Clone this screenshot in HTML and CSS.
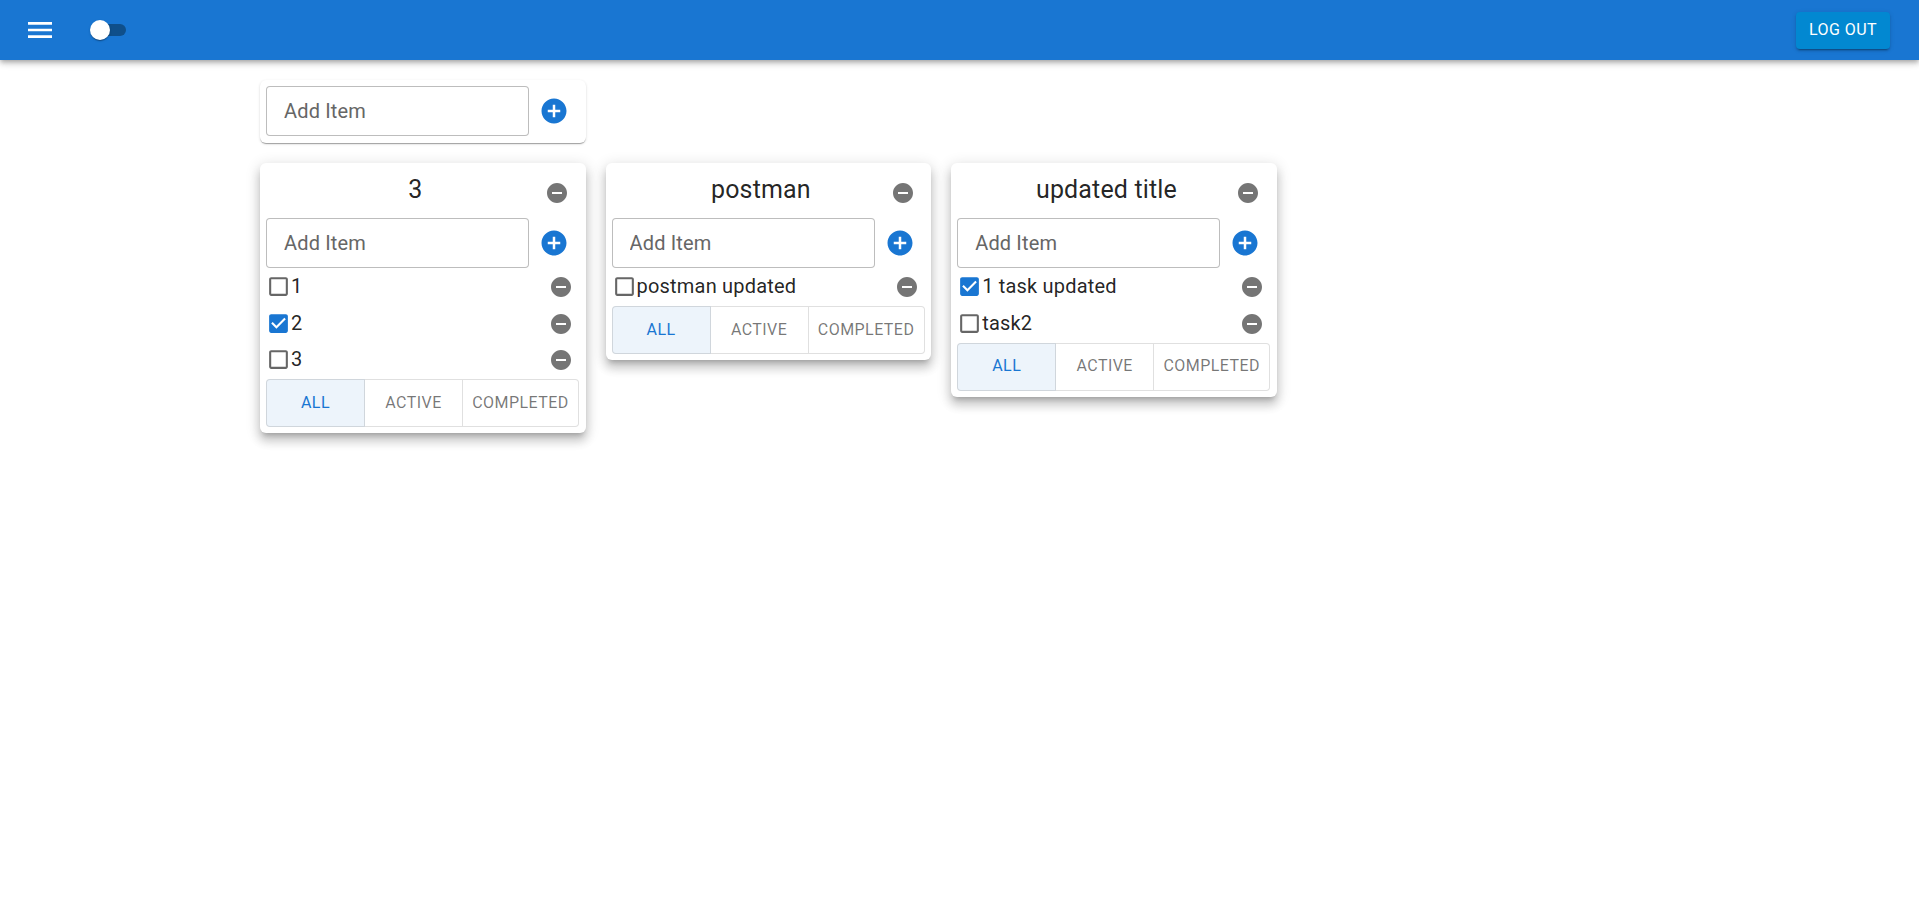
FILE: index.html
```html
<!DOCTYPE html>
<html lang="en">
<head>
    <meta charset="UTF-8">
    <meta name="viewport" content="width=device-width, initial-scale=1.0">
    <title>Todo Lists</title>
    <link rel="stylesheet" href="styles.css">
</head>
<body>
    <svg class="icon-defs" aria-hidden="true">
        <symbol id="i-add" viewBox="0 0 24 24"><path d="M12 2C6.48 2 2 6.48 2 12s4.48 10 10 10 10-4.48 10-10S17.52 2 12 2zm5 11h-4v4h-2v-4H7v-2h4V7h2v4h4v2z"/></symbol>
        <symbol id="i-remove" viewBox="0 0 24 24"><path d="M12 2C6.48 2 2 6.48 2 12s4.48 10 10 10 10-4.48 10-10S17.52 2 12 2zm5 11H7v-2h10v2z"/></symbol>
        <symbol id="i-blank" viewBox="0 0 24 24"><path d="M19 5v14H5V5h14m0-2H5c-1.1 0-2 .9-2 2v14c0 1.1.9 2 2 2h14c1.1 0 2-.9 2-2V5c0-1.1-.9-2-2-2z"/></symbol>
        <symbol id="i-checked" viewBox="0 0 24 24"><path d="M19 3H5c-1.11 0-2 .9-2 2v14c0 1.1.89 2 2 2h14c1.11 0 2-.9 2-2V5c0-1.1-.89-2-2-2zm-9 14l-5-5 1.41-1.41L10 14.17l7.59-7.59L19 8l-9 9z"/></symbol>
    </svg>

    <header class="appbar">
        <svg class="menu-icon" viewBox="0 0 24 24"><path d="M3 18h18v-2H3v2zm0-5h18v-2H3v2zm0-7v2h18V6H3z"/></svg>
        <div class="switch"><span class="switch-track"></span><span class="switch-thumb"></span></div>
        <button class="logout">Log out</button>
    </header>

    <main class="page">
        <div class="card add-card">
            <div class="add-row">
                <input type="text" class="add-input" placeholder="Add Item">
                <svg class="add-btn"><use href="#i-add"/></svg>
            </div>
        </div>

        <div class="board">
            <section class="card">
                <div class="title-row">
                    <h3 class="title">3</h3>
                    <svg class="del-btn title-del"><use href="#i-remove"/></svg>
                </div>
                <div class="add-row">
                    <input type="text" class="add-input" placeholder="Add Item">
                    <svg class="add-btn"><use href="#i-add"/></svg>
                </div>
                <ul class="tasks">
                    <li class="task"><svg class="box"><use href="#i-blank"/></svg><span class="task-text">1</span><svg class="del-btn"><use href="#i-remove"/></svg></li>
                    <li class="task"><svg class="box checked"><use href="#i-checked"/></svg><span class="task-text">2</span><svg class="del-btn"><use href="#i-remove"/></svg></li>
                    <li class="task"><svg class="box"><use href="#i-blank"/></svg><span class="task-text">3</span><svg class="del-btn"><use href="#i-remove"/></svg></li>
                </ul>
                <div class="filters">
                    <button class="filter selected">All</button>
                    <button class="filter">Active</button>
                    <button class="filter wide">Completed</button>
                </div>
            </section>

            <section class="card">
                <div class="title-row">
                    <h3 class="title">postman</h3>
                    <svg class="del-btn title-del"><use href="#i-remove"/></svg>
                </div>
                <div class="add-row">
                    <input type="text" class="add-input" placeholder="Add Item">
                    <svg class="add-btn"><use href="#i-add"/></svg>
                </div>
                <ul class="tasks">
                    <li class="task"><svg class="box"><use href="#i-blank"/></svg><span class="task-text">postman updated</span><svg class="del-btn"><use href="#i-remove"/></svg></li>
                </ul>
                <div class="filters">
                    <button class="filter selected">All</button>
                    <button class="filter">Active</button>
                    <button class="filter wide">Completed</button>
                </div>
            </section>

            <section class="card">
                <div class="title-row">
                    <h3 class="title">updated title</h3>
                    <svg class="del-btn title-del"><use href="#i-remove"/></svg>
                </div>
                <div class="add-row">
                    <input type="text" class="add-input" placeholder="Add Item">
                    <svg class="add-btn"><use href="#i-add"/></svg>
                </div>
                <ul class="tasks">
                    <li class="task"><svg class="box checked"><use href="#i-checked"/></svg><span class="task-text">1 task updated</span><svg class="del-btn"><use href="#i-remove"/></svg></li>
                    <li class="task"><svg class="box"><use href="#i-blank"/></svg><span class="task-text">task2</span><svg class="del-btn"><use href="#i-remove"/></svg></li>
                </ul>
                <div class="filters">
                    <button class="filter selected">All</button>
                    <button class="filter">Active</button>
                    <button class="filter wide">Completed</button>
                </div>
            </section>
        </div>
    </main>
</body>
</html>
```

FILE: styles.css
```css
* {
    box-sizing: border-box;
}
body {
    margin: 0;
    background: #fff;
    color: rgba(0, 0, 0, 0.87);
    font-family: Roboto, "Liberation Sans", sans-serif;
}
.icon-defs {
    display: none;
}
.appbar {
    display: flex;
    align-items: center;
    height: 60px;
    padding: 0 29px 0 24px;
    background: #1976d2;
    box-shadow: 0 2px 4px -1px rgba(0, 0, 0, 0.2), 0 4px 5px 0 rgba(0, 0, 0, 0.14), 0 1px 10px 0 rgba(0, 0, 0, 0.12);
}
.menu-icon {
    width: 32px;
    height: 32px;
    fill: #fff;
}
.switch {
    position: relative;
    width: 36px;
    height: 20px;
    margin-left: 34px;
}
.switch-track {
    position: absolute;
    top: 4px;
    left: 2px;
    width: 34px;
    height: 12px;
    border-radius: 6px;
    background: #0f4f8a;
}
.switch-thumb {
    position: absolute;
    top: 0;
    left: 0;
    width: 20px;
    height: 20px;
    border-radius: 50%;
    background: #fff;
    box-shadow: 0 2px 1px -1px rgba(0, 0, 0, 0.2), 0 1px 1px 0 rgba(0, 0, 0, 0.14), 0 1px 3px 0 rgba(0, 0, 0, 0.12);
}
.logout {
    width: 94px;
    height: 37px;
    margin-left: auto;
    padding: 0 0 2px;
    border: none;
    border-radius: 4px;
    background: #0288d1;
    color: #fff;
    font: 400 16px Roboto, sans-serif;
    letter-spacing: 0.45px;
    text-transform: uppercase;
    box-shadow: 0 3px 1px -2px rgba(0, 0, 0, 0.2), 0 2px 2px 0 rgba(0, 0, 0, 0.14), 0 1px 5px 0 rgba(0, 0, 0, 0.12);
}
.page {
    min-height: calc(100vh - 60px);
    padding: 20px 0 0 260px;
}
.card {
    width: 325.6px;
    padding: 6px;
    border-radius: 6px;
    background: #fff;
    box-shadow: 0 5px 5px -3px rgba(0, 0, 0, 0.2), 0 8px 10px 1px rgba(0, 0, 0, 0.14), 0 3px 14px 2px rgba(0, 0, 0, 0.12);
}
.add-card {
    height: 63px;
    box-shadow: 0 2px 1px -1px rgba(0, 0, 0, 0.2), 0 1px 1px 0 rgba(0, 0, 0, 0.14), 0 1px 3px 0 rgba(0, 0, 0, 0.12);
}
.board {
    display: flex;
    align-items: flex-start;
    gap: 20px;
    margin-top: 20px;
}
.title-row {
    display: flex;
    height: 49px;
}
.title {
    flex: 1;
    margin: 0;
    padding-top: 3px;
    font-size: 25px;
    font-weight: 400;
    letter-spacing: 0.15px;
    line-height: 36px;
    text-align: center;
}
.del-btn {
    flex: none;
    width: 24px;
    height: 24px;
    fill: #757575;
}
.title-del {
    margin: 12px 10.5px 0 -19.5px;
}
.add-row {
    display: flex;
    align-items: center;
    gap: 10px;
}
.add-input {
    width: 263px;
    height: 50px;
    padding: 0 17px;
    border: 1px solid rgba(0, 0, 0, 0.26);
    border-radius: 4px;
    outline: none;
    color: rgba(0, 0, 0, 0.87);
    font: 400 20px Roboto, sans-serif;
    letter-spacing: 0.15px;
}
.add-input::placeholder {
    color: #666;
    opacity: 1;
}
.add-btn {
    flex: none;
    width: 30px;
    height: 30px;
    fill: #1976d2;
}
.tasks {
    margin: 0;
    padding: 1px 0;
    list-style: none;
}
.task {
    display: flex;
    align-items: center;
    height: 36.4px;
}
.box {
    flex: none;
    width: 25px;
    height: 25px;
    margin-top: -1px;
    fill: #666;
}
.box.checked {
    fill: #1976d2;
}
.task-text {
    flex: 1;
    margin-top: -2px;
    font-size: 20px;
    letter-spacing: 0.19px;
}
.task .del-btn {
    margin-right: 6.5px;
}
.filters {
    display: flex;
    width: 313px;
    height: 48px;
}
.filter {
    width: 98px;
    padding: 0 0 2px;
    border: 1px solid rgba(0, 0, 0, 0.12);
    border-left: none;
    background: #fff;
    color: rgba(0, 0, 0, 0.54);
    font: 400 16px Roboto, sans-serif;
    letter-spacing: 0.45px;
    text-transform: uppercase;
}
.filter.wide {
    width: 116px;
    border-radius: 0 4px 4px 0;
}
.filter.selected {
    width: 99px;
    border-left: 1px solid rgba(0, 0, 0, 0.12);
    border-radius: 4px 0 0 4px;
    background: #edf4fb;
    color: #1976d2;
}
```
